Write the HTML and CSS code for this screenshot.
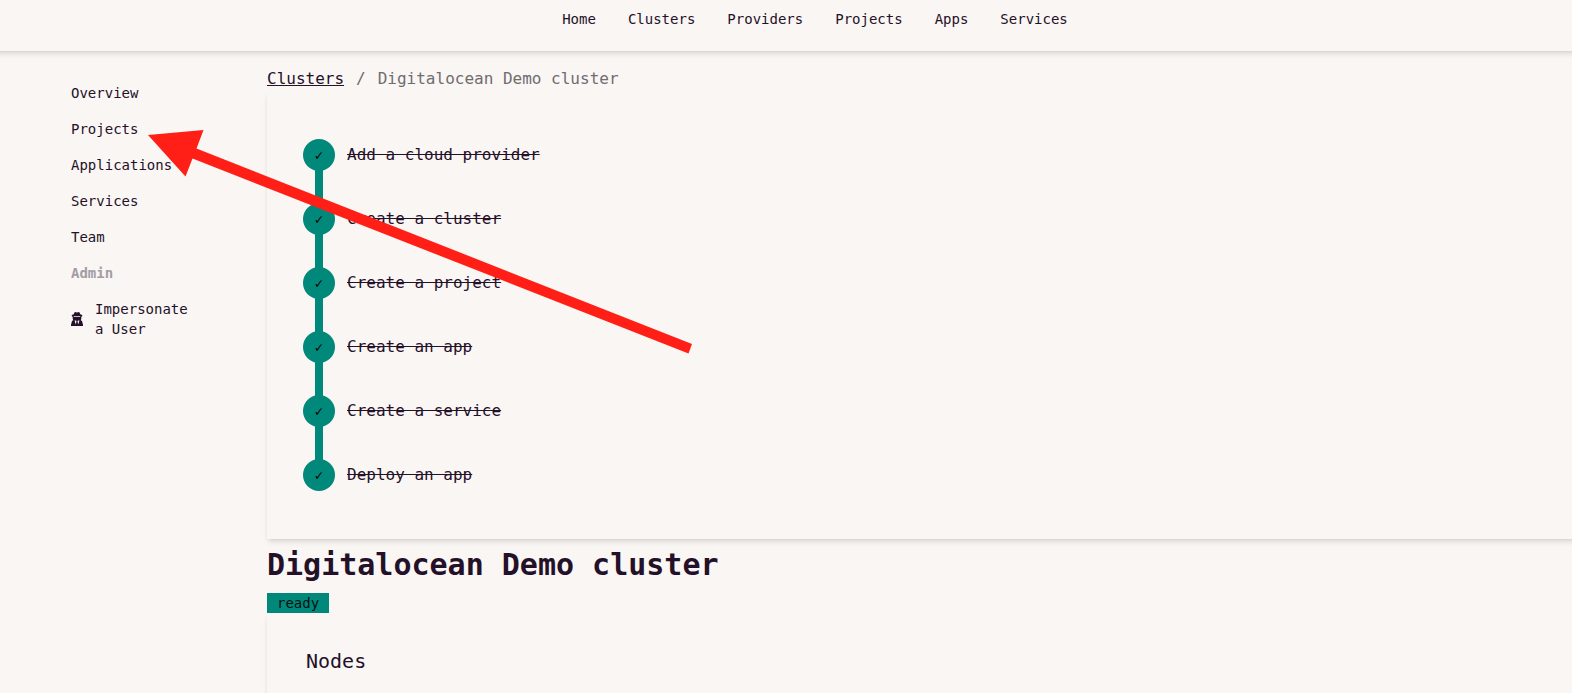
FILE: index.html
```html
<!DOCTYPE html>
<html lang="en">
<head>
<meta charset="utf-8">
<title>Digitalocean Demo cluster</title>
<link rel="stylesheet" href="styles.css">
</head>
<body>
<header class="topbar">
  <nav class="topnav" aria-label="Main">
    <a href="#">Home</a>
    <a href="#">Clusters</a>
    <a href="#">Providers</a>
    <a href="#">Projects</a>
    <a href="#">Apps</a>
    <a href="#">Services</a>
  </nav>
</header>
<div class="layout">
  <aside class="sidebar">
    <ul class="menu">
      <li><a href="#">Overview</a></li>
      <li><a href="#">Projects</a></li>
      <li><a href="#">Applications</a></li>
      <li><a href="#">Services</a></li>
      <li><a href="#">Team</a></li>
      <li class="menu-title">Admin</li>
      <li>
        <a href="#" class="with-icon">
          <svg class="icon" viewBox="0 0 12 14" aria-hidden="true">
            <path fill="currentColor" fill-rule="evenodd" d="M3.6 .3 Q4.2 -.1 4.8 .2 L6 .6 L7.2 .2 Q7.8 -.1 8.4 .3 L9.3 2.3 L11.2 3.1 V4.3 L10.3 4.7 V6.8 L9.8 8.3 L11 9 L12 12.8 V14 H0 V12.8 L1 9 L2.2 8.3 L1.7 6.8 V4.7 L.8 4.3 V3.1 L2.7 2.3 Z M2.8 4.2 V5 H9.2 V4.2 Z M3.6 8.6 L4.7 12.6 L5.5 9.6 L5.1 8.6 Z M8.4 8.6 L7.3 12.6 L6.5 9.6 L6.9 8.6 Z"/>
          </svg>
          <span>Impersonate a User</span>
        </a>
      </li>
    </ul>
  </aside>
  <main class="content">
    <nav class="breadcrumbs" aria-label="Breadcrumb">
      <a href="#">Clusters</a><span>/</span><span>Digitalocean Demo cluster</span>
    </nav>
    <section class="card">
      <ol class="steps">
        <li><span class="dot">✓</span><s>Add a cloud provider</s></li>
        <li><span class="dot">✓</span><s>Create a cluster</s></li>
        <li><span class="dot">✓</span><s>Create a project</s></li>
        <li><span class="dot">✓</span><s>Create an app</s></li>
        <li><span class="dot">✓</span><s>Create a service</s></li>
        <li><span class="dot">✓</span><s>Deploy an app</s></li>
      </ol>
    </section>
    <h1>Digitalocean Demo cluster</h1>
    <span class="badge">ready</span>
    <section class="card nodes">
      <h2>Nodes</h2>
    </section>
  </main>
</div>
<svg class="arrow" viewBox="0 0 544 224" aria-hidden="true">
  <path fill="#ff1f17" d="M0 5 L55.5 0 L48.5 18.5 L544 214 L540.5 223.5 L44.5 28.5 L37.5 46.5 Z"/>
</svg>
</body>
</html>
```
FILE: styles.css
```css
* {
  box-sizing: border-box;
}

body {
  margin: 0;
  min-height: 100vh;
  overflow: hidden;
  background: #faf6f3;
  color: #241129;
  font-family: "DejaVu Sans Mono", monospace;
  font-size: 16px;
  line-height: 24px;
}

a {
  color: inherit;
  text-decoration: none;
}

ul,
ol {
  margin: 0;
  padding: 0;
  list-style: none;
}

.topbar,
.card {
  box-shadow: 0 4px 6px -1px rgba(0, 0, 0, 0.1), 0 2px 4px -2px rgba(0, 0, 0, 0.1);
}

.topbar {
  margin: 0 -16px;
  padding: 9px 0 22px 58px;
}

.topnav {
  display: flex;
  justify-content: center;
  gap: 32px;
  font-size: 14px;
  line-height: 20px;
}

.layout {
  display: flex;
}

.sidebar {
  flex: 0 0 267px;
  padding: 24px 71px 0;
}

.menu {
  font-size: 14px;
  line-height: 20px;
}

.menu a,
.menu-title {
  display: block;
  padding: 8px 0;
}

.menu-title {
  color: #a39ca6;
  font-weight: bold;
}

.menu .with-icon {
  display: flex;
  align-items: center;
  gap: 12px;
}

.icon {
  flex: none;
  width: 12px;
  height: 14px;
}

.content {
  flex: 1;
  min-width: 0;
  margin-right: -16px;
  padding-top: 16px;
}

.breadcrumbs {
  display: flex;
  gap: 12px;
  color: #706c70;
}

.breadcrumbs a {
  color: #241129;
  text-decoration: underline;
}

.card {
  padding: 32px;
}

.steps li {
  position: relative;
  display: flex;
  align-items: center;
  gap: 12px;
  height: 64px;
  padding-left: 4px;
}

.steps li + li::before {
  content: "";
  position: absolute;
  left: 16px;
  bottom: 32px;
  width: 8px;
  height: 64px;
  background: #00897a;
}

.dot {
  position: relative;
  display: grid;
  place-items: center;
  width: 32px;
  height: 32px;
  border-radius: 50%;
  background: #00897a;
  color: #000;
  font-size: 14px;
  font-weight: bold;
}

.steps li:not(:last-child) .dot {
  z-index: 1;
}

h1 {
  margin: 8px 0 10px;
  font-size: 30px;
  line-height: 36px;
}

.badge {
  display: block;
  width: fit-content;
  padding: 0 10px;
  background: #00897a;
  color: #001210;
  font-size: 14px;
  line-height: 20px;
}

.nodes {
  padding: 34px 39px;
}

h2 {
  margin: 0;
  font-size: 20px;
  font-weight: normal;
  line-height: 28px;
}

.arrow {
  position: absolute;
  left: 148px;
  top: 130px;
  z-index: 2;
  width: 544px;
  height: 224px;
  pointer-events: none;
}
```
